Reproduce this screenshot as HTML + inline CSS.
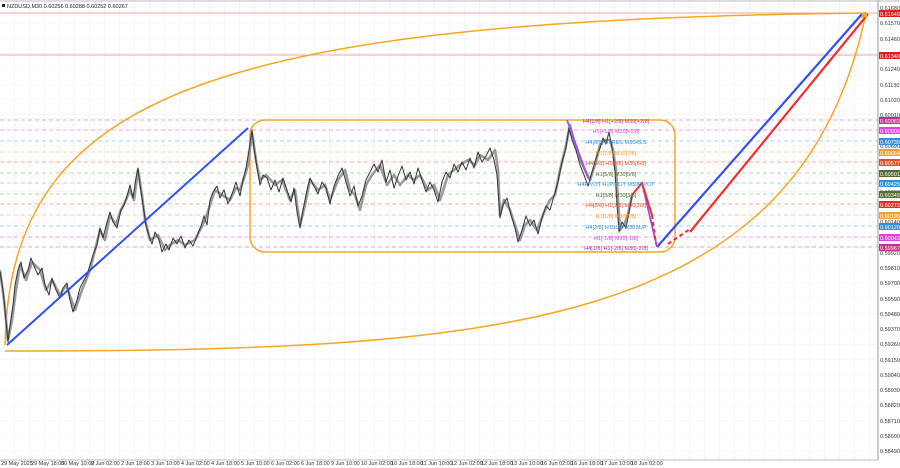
<!DOCTYPE html>
<html><head><meta charset="utf-8"><style>
body{margin:0;background:#fff;}
svg{display:block;font-family:"Liberation Sans",sans-serif;}
</style></head><body>
<svg width="900" height="468" viewBox="0 0 900 468" xmlns="http://www.w3.org/2000/svg">
<defs>
<pattern id="g" width="15" height="15.3" patternUnits="userSpaceOnUse" x="0" y="8">
<path d="M15 0V15.3M0 15.3H15" stroke="#ececec" stroke-width="1" fill="none"/>
</pattern>
</defs>
<rect x="0" y="0" width="900" height="468" fill="#fff"/>
<rect x="0" y="0" width="878" height="460" fill="url(#g)"/>
<line x1="878" y1="0" x2="878" y2="460" stroke="#999"/>
<line x1="0" y1="460" x2="878" y2="460" stroke="#bbb"/>
<line x1="0" y1="1" x2="900" y2="1" stroke="#bbb"/>
<line x1="0" y1="13" x2="878" y2="13" stroke="#f4a0a0"/>
<line x1="0" y1="55" x2="878" y2="55" stroke="#f4a0a0"/>
<g stroke-width="1" stroke-dasharray="4,3">
<line x1="0" y1="120" x2="878" y2="120" stroke="#e8a0d8"/>
<line x1="0" y1="130" x2="878" y2="130" stroke="#f0a0f0"/>
<line x1="0" y1="141" x2="878" y2="141" stroke="#a8d0f4"/>
<line x1="0" y1="152" x2="878" y2="152" stroke="#f8d0a0"/>
<line x1="0" y1="162" x2="878" y2="162" stroke="#f4b0a0"/>
<line x1="0" y1="173" x2="878" y2="173" stroke="#c8d0b0"/>
<line x1="0" y1="183" x2="878" y2="183" stroke="#a8d0f4"/>
<line x1="0" y1="194" x2="878" y2="194" stroke="#c8d0b0"/>
<line x1="0" y1="204" x2="878" y2="204" stroke="#f4b0a0"/>
<line x1="0" y1="215" x2="878" y2="215" stroke="#f8d0a0"/>
<line x1="0" y1="226" x2="878" y2="226" stroke="#a8d0f4"/>
<line x1="0" y1="237" x2="878" y2="237" stroke="#f0a0f0"/>
<line x1="0" y1="247" x2="878" y2="247" stroke="#e8a0d8"/>
</g>
<path d="M5 345 C 10 100 200 20 866 13" stroke="#f5a623" stroke-width="1.5" fill="none"/>
<path d="M5 351 C 500 351 800 330 866 13" stroke="#f5a623" stroke-width="1.5" fill="none"/>
<rect x="250" y="120" width="425" height="132" rx="15" stroke="#f5a623" stroke-width="1.5" fill="none"/>
<g fill="none" stroke-linejoin="round">
<polyline stroke="#999" stroke-width="2.6" points="0,270 4,300 8,340 12,320 16,290 20,265 26,280 32,262 40,270 46,290 52,280 60,295 66,285 75,310 82,290 90,270 95,250 100,230 105,240 110,215 116,225 120,212 126,200 130,190 134,200 138,170 142,195 145,220 150,240 158,235 165,250 170,245 178,240 185,245 195,240 200,230 205,220 210,205 215,190 222,195 230,200 236,188 240,190 245,175 248,165 252,133 256,160 260,180 266,175 275,185 282,180 290,200 295,190 300,225 305,205 310,180 318,190 325,185 330,200 338,180 345,170 350,190 355,195 360,210 366,185 372,175 380,165 387,185 394,175 400,185 408,175 414,180 420,175 428,190 434,185 440,200 448,175 454,170 460,165 468,160 475,165 480,155 488,160 495,150 498,170 500,215 504,200 510,210 515,225 520,240 525,225 530,220 537,230 545,210 550,200 555,195 560,170 565,150 570,125 575,145 580,160 585,170 590,180 595,165 600,145 605,140 610,140 613,150 616,170 618,200 620,230 624,225 628,215 632,195"/>
<polyline stroke="#333" stroke-width="1" points="0,272 3,290 5,310 8,342 10,325 13,305 15,285 18,270 21,262 24,278 28,270 31,258 34,266 38,275 42,268 45,285 49,295 52,278 56,290 60,298 63,288 67,283 70,300 73,312 77,300 80,288 84,280 87,275 90,265 93,255 97,245 100,228 103,238 107,222 110,212 113,222 117,228 121,210 124,205 127,196 130,185 133,198 136,178 138,168 140,185 143,205 146,225 149,236 152,244 155,232 159,240 162,252 166,244 169,250 173,238 177,244 181,236 185,248 189,240 193,246 197,236 201,226 204,216 207,225 210,200 213,192 217,186 220,198 224,190 228,204 232,194 236,182 240,196 243,180 246,168 249,150 252,130 254,148 257,168 260,185 263,175 267,178 271,190 275,180 279,192 283,178 287,190 291,202 294,188 297,212 300,228 303,210 307,190 310,178 314,186 318,194 322,182 326,188 330,204 334,186 338,176 342,168 346,182 350,196 354,186 358,206 362,196 366,180 370,172 374,164 378,172 382,160 386,182 390,170 394,188 398,176 402,166 406,180 410,172 414,184 418,168 422,180 426,192 430,182 434,190 438,202 442,182 446,172 450,178 454,164 458,172 462,162 466,170 470,158 474,168 478,152 482,162 486,156 490,148 494,160 497,175 500,218 503,205 507,198 511,215 515,228 518,242 522,230 526,216 530,226 534,220 538,234 542,218 546,206 550,210 554,196 558,182 562,162 566,148 569,128 572,140 576,150 580,165 584,175 588,186 592,172 596,158 600,148 603,138 606,144 609,132 612,148 615,172 617,205 619,232 622,222 626,228 629,212 632,196"/>
</g>
<line x1="7" y1="345" x2="248" y2="128" stroke="#3050f0" stroke-width="2"/>
<line x1="657" y1="247" x2="862" y2="14" stroke="#3050f0" stroke-width="2.2"/>
<line x1="690" y1="232" x2="868" y2="14" stroke="#f03030" stroke-width="2.2"/>
<line x1="567" y1="120" x2="588" y2="178" stroke="#a050e0" stroke-width="1.8"/>
<line x1="642" y1="183" x2="657" y2="247" stroke="#a050e0" stroke-width="1.8"/>
<polyline points="632,195 642,183 652,215" stroke="#f03030" stroke-width="2" fill="none"/>
<line x1="652" y1="215" x2="656" y2="244" stroke="#f03030" stroke-width="2" stroke-dasharray="4,3"/>
<line x1="668" y1="244" x2="690" y2="229" stroke="#f03030" stroke-width="2" stroke-dasharray="4,3"/>
<path d="M866 11 L860 18 L868 17Z" fill="#f5a623"/>
<g font-size="5.5" text-anchor="middle">
<text x="616" y="123" fill="#c03090">H4[1/8] H1[+2/8] M30[+2/8]</text>
<text x="616" y="133" fill="#e040e0">H1[+1/8] M30[+1/8]</text>
<text x="616" y="144" fill="#3090e0">H4[8/8] H1RES M30RES</text>
<text x="616" y="155" fill="#f0a030">H1[7/8] M30[7/8]</text>
<text x="616" y="165" fill="#e05030">H4[5/8] H1[6/8] M30[6/8]</text>
<text x="616" y="176" fill="#556b2f">H1[5/8] M30[5/8]</text>
<text x="616" y="186" fill="#3090e0">H4PIVOT H1PIVOT M30PIVOT</text>
<text x="616" y="197" fill="#556b2f">H1[3/8] M30[3/8]</text>
<text x="616" y="207" fill="#e05030">H4[3/8] H1[2/8] M30[2/8]</text>
<text x="616" y="218" fill="#f0a030">H1[1/8] M30[1/8]</text>
<text x="616" y="229" fill="#3090e0">H4[2/8] H1SUP M30SUP</text>
<text x="616" y="240" fill="#e040e0">H1[-1/8] M30[-1/8]</text>
<text x="616" y="250" fill="#c03090">H4[1/8] H1[-2/8] M30[-2/8]</text>
</g>
<g font-size="5.5" fill="#333">
<text x="880" y="10">0.61680</text><text x="880" y="25">0.61570</text><text x="880" y="41">0.61460</text>
<text x="880" y="71">0.61240</text><text x="880" y="87">0.61130</text><text x="880" y="102">0.61020</text>
<text x="880" y="117">0.60910</text><text x="880" y="148">0.60690</text><text x="880" y="194">0.60360</text>
<text x="880" y="224">0.60140</text><text x="880" y="255">0.59920</text><text x="880" y="270">0.59810</text>
<text x="880" y="285">0.59700</text><text x="880" y="301">0.59590</text><text x="880" y="316">0.59480</text>
<text x="880" y="331">0.59370</text><text x="880" y="346">0.59260</text><text x="880" y="362">0.59150</text>
<text x="880" y="377">0.59040</text><text x="880" y="392">0.58930</text><text x="880" y="407">0.58820</text>
<text x="880" y="423">0.58710</text><text x="880" y="438">0.58600</text><text x="880" y="453">0.58490</text>
</g>
<g font-size="5.5" fill="#fff">
<rect x="879" y="10" width="21" height="7" fill="#e02020"/><text x="880" y="16">0.61645</text>
<rect x="879" y="52" width="21" height="7" fill="#e02020"/><text x="880" y="58">0.61340</text>
<rect x="879" y="117" width="21" height="7" fill="#c03090"/><text x="880" y="123">0.60083</text>
<rect x="879" y="127" width="21" height="7" fill="#e040e0"/><text x="880" y="133">0.60006</text>
<rect x="879" y="138" width="21" height="7" fill="#3090e0"/><text x="880" y="144">0.60730</text>
<rect x="879" y="149" width="21" height="7" fill="#f0a030"/><text x="880" y="155">0.60654</text>
<rect x="879" y="159" width="21" height="7" fill="#e05030"/><text x="880" y="165">0.60577</text>
<rect x="879" y="170" width="21" height="7" fill="#556b2f"/><text x="880" y="176">0.60501</text>
<rect x="879" y="180" width="21" height="7" fill="#3090e0"/><text x="880" y="186">0.60425</text>
<rect x="879" y="191" width="21" height="7" fill="#556b2f"/><text x="880" y="197">0.60349</text>
<rect x="879" y="201" width="21" height="7" fill="#e03020"/><text x="880" y="207">0.60272</text>
<rect x="879" y="212" width="21" height="7" fill="#f0a030"/><text x="880" y="218">0.60196</text>
<rect x="879" y="223" width="21" height="7" fill="#3090e0"/><text x="880" y="229">0.60120</text>
<rect x="879" y="234" width="21" height="7" fill="#e040e0"/><text x="880" y="240">0.60043</text>
<rect x="879" y="244" width="21" height="7" fill="#c03090"/><text x="880" y="250">0.59967</text>
</g>
<g font-size="5.5" fill="#333">
<text x="1" y="465">29 May 2025</text><text x="31" y="465">29 May 18:00</text><text x="61" y="465">30 May 10:00</text>
<text x="91" y="465">2 Jun 02:00</text><text x="121" y="465">2 Jun 18:00</text><text x="151" y="465">3 Jun 10:00</text>
<text x="181" y="465">4 Jun 02:00</text><text x="211" y="465">4 Jun 18:00</text><text x="241" y="465">5 Jun 10:00</text>
<text x="271" y="465">6 Jun 02:00</text><text x="301" y="465">6 Jun 18:00</text><text x="331" y="465">9 Jun 10:00</text>
<text x="361" y="465">10 Jun 02:00</text><text x="391" y="465">10 Jun 18:00</text><text x="421" y="465">11 Jun 10:00</text>
<text x="451" y="465">12 Jun 02:00</text><text x="481" y="465">12 Jun 18:00</text><text x="511" y="465">13 Jun 10:00</text>
<text x="541" y="465">16 Jun 02:00</text><text x="571" y="465">16 Jun 18:00</text><text x="601" y="465">17 Jun 10:00</text>
<text x="631" y="465">18 Jun 02:00</text>
</g>
<rect x="2" y="4" width="3" height="3" fill="#222"/>
<text x="7" y="8" font-size="5.5" fill="#222">NZDUSD,M30  0.60256 0.60288 0.60252 0.60267</text>
</svg>
</body></html>
